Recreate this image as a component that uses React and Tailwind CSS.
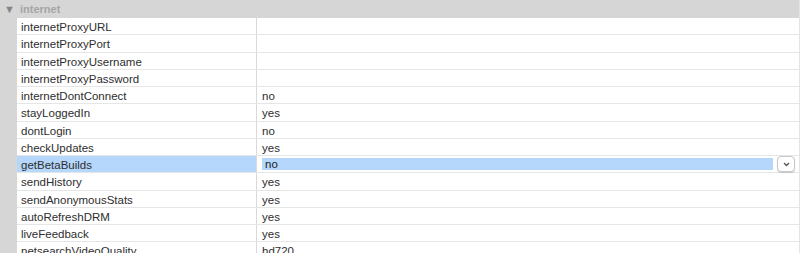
const rows = [
  ["internetProxyURL", ""],
  ["internetProxyPort", ""],
  ["internetProxyUsername", ""],
  ["internetProxyPassword", ""],
  ["internetDontConnect", "no"],
  ["stayLoggedIn", "yes"],
  ["dontLogin", "no"],
  ["checkUpdates", "yes"],
  ["getBetaBuilds", "no", true],
  ["sendHistory", "yes"],
  ["sendAnonymousStats", "yes"],
  ["autoRefreshDRM", "yes"],
  ["liveFeedback", "yes"],
  ["netsearchVideoQuality", "hd720"],
];

export default function App() {
  return (
    <div className="w-[800px] h-[253px] overflow-hidden bg-white text-[11.5px] text-[#2e2e2e] font-['Liberation_Sans',Arial,sans-serif]">
      {/* Group header */}
      <div className="h-[18px] bg-[#d6d6d6] flex items-center pl-[4px] border-r border-[#e4e4e4]">
        <span className="text-[11px] text-[#858585] w-[16px] leading-none">▼</span>
        <span className="text-[#a5a5a5] font-bold text-[11px]">internet</span>
      </div>

      <div className="flex">
        {/* Gutter */}
        <div className="w-[17px] shrink-0 bg-[#d6d6d6]" />

        <div className="flex-1 border-r border-[#e4e4e4]">
          {rows.map(([name, value, selected]) => (
            <div key={name} className="flex h-[17.25px] border-b border-[#e6e6e6]">
              <div
                className={`w-[240px] shrink-0 pl-[4px] pt-[1px] leading-[16px] border-r border-[#d9d9d9] ${
                  selected ? "bg-[#b4d7fb]" : ""
                }`}
              >
                {name}
              </div>
              {selected ? (
                <div className="flex-1 flex items-center pl-[4px] pr-[4px] gap-[3px]">
                  <div className="flex-1 h-[14px] bg-[#b4d7fb] border border-white leading-[12px] pl-[3px] text-[#222]">
                    {value}
                  </div>
                  <div className="w-[18px] h-[16px] rounded-[4px] bg-white border border-[#c8c8c8] shadow-[0_1px_1px_rgba(0,0,0,0.15)] flex items-center justify-center">
                    <svg width="7" height="5" viewBox="0 0 7 5">
                      <path d="M1 1l2.5 2.5L6 1" fill="none" stroke="#555" strokeWidth="1.3" />
                    </svg>
                  </div>
                </div>
              ) : (
                <div className="flex-1 pl-[5px] pt-[1px] leading-[16px]">{value}</div>
              )}
            </div>
          ))}
        </div>
      </div>
    </div>
  );
}
